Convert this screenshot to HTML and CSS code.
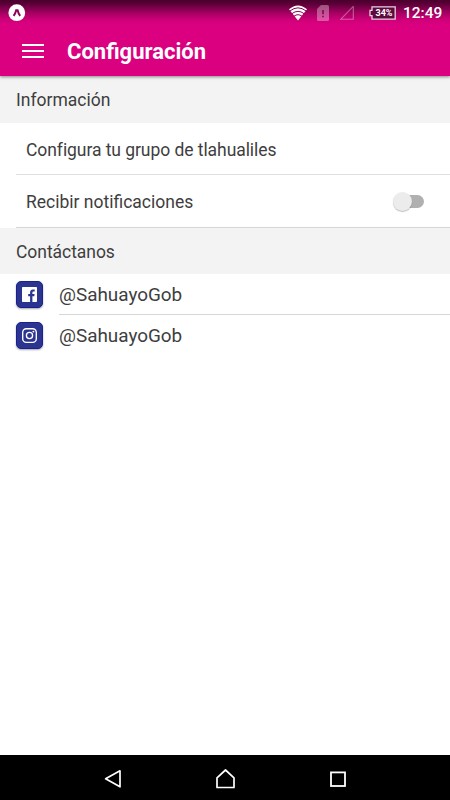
FILE: index.html
```
<!DOCTYPE html>
<html lang="es">
<head>
  <meta charset="UTF-8">
  <meta name="viewport" content="width=device-width, initial-scale=1.0">
  <title>Configuración</title>
  <link rel="stylesheet" href="styles.css">
</head>
<body>
  <header>
    <div class="status-bar">
      <svg class="app-icon" width="18" height="18" viewBox="0 0 18 18">
        <circle cx="8.8" cy="8.7" r="8.4" fill="#fff"/>
        <path d="M5.6 11.8 Q7.4 9.6 8.2 6.2 H9.6 Q10.4 9.6 12.2 11.8" fill="none" stroke="#8f0058" stroke-width="2"/>
      </svg>
      <svg class="wifi" width="18" height="16" viewBox="0 0 18 16">
        <path d="M9 15.5 L0 4.2 Q9 -3.4 18 4.2 Z" fill="#fff"/>
        <path d="M1 5.9 Q9 -0.2 17 5.9 M3 8.6 Q9 4.1 15 8.6 M5 11.2 Q9 8.2 13 11.2" fill="none" stroke="#8f0058" stroke-width="1"/>
      </svg>
      <svg class="sim" width="12" height="16" viewBox="0 0 12 16">
        <path d="M4 0 H10.5 Q12 0 12 1.5 V14.5 Q12 16 10.5 16 H1.5 Q0 16 0 14.5 V4 Z" fill="#fff" fill-opacity=".33"/>
        <path d="M5.2 5 H6.8 V9.3 H5.2 Z M5.2 10.7 H6.8 V12.3 H5.2 Z" fill="#8a0056"/>
      </svg>
      <svg class="signal" width="14" height="14" viewBox="0 0 14 14">
        <path d="M13.3 .4 V13.3 H.6 Z" fill="none" stroke="#fff" stroke-opacity=".36" stroke-width="1.1"/>
      </svg>
      <div class="battery">
        <svg width="28" height="14" viewBox="0 0 28 14">
          <path d="M3 .8 H26.2 V13.2 H3 V9.6 H1 V4.4 H3 Z" fill="#5d0a3f" stroke="#e9cfe0" stroke-width="1.3"/>
        </svg>
        <span>34%</span>
      </div>
      <span class="clock">12:49</span>
    </div>
    <div class="toolbar">
      <div class="menu-icon">
        <span></span>
        <span></span>
        <span></span>
      </div>
      <h1>Configuración</h1>
    </div>
  </header>
  <main>
    <h2>Información</h2>
    <div class="item">
      <p>Configura tu grupo de tlahualiles</p>
    </div>
    <div class="item">
      <p>Recibir notificaciones</p>
      <div class="switch"></div>
    </div>
    <h2 class="contact-title">Contáctanos</h2>
    <div class="contact">
      <div class="social">
        <svg width="15" height="15" viewBox="0 0 15 15">
          <path d="M0 .8 Q0 0 .8 0 H14.2 Q15 0 15 .8 V14.2 Q15 15 14.2 15 H10.4 V9.3 H12.3 L12.6 7 H10.4 V5.6 Q10.4 4.5 11.5 4.5 H12.7 V2.5 Q12 2.4 11 2.4 Q8.1 2.4 8.1 5.3 V7 H6.2 V9.3 H8.1 V15 H.8 Q0 15 0 14.2 Z" fill="#fff"/>
        </svg>
      </div>
      <p>@SahuayoGob</p>
    </div>
    <div class="contact">
      <div class="social">
        <svg width="15" height="15" viewBox="0 0 15 15">
          <rect x=".7" y=".7" width="13.6" height="13.6" rx="3.6" fill="none" stroke="#fff" stroke-width="1.35"/>
          <circle cx="7.5" cy="7.5" r="3.1" fill="none" stroke="#fff" stroke-width="1.35"/>
          <circle cx="11.4" cy="3.6" r=".95" fill="#fff"/>
        </svg>
      </div>
      <p>@SahuayoGob</p>
    </div>
  </main>
  <footer>
    <svg width="18" height="20" viewBox="0 0 18 20">
      <path d="M16 1.8 V17.8 L1.6 9.8 Z" fill="none" stroke="#fff" stroke-width="1.7" stroke-linejoin="round"/>
    </svg>
    <svg width="20" height="20" viewBox="0 0 20 20">
      <path d="M1 8.8 L9.5 1 L18 8.8 V18.5 H1 Z" fill="none" stroke="#fff" stroke-width="1.7" stroke-linejoin="round"/>
    </svg>
    <svg width="16" height="16" viewBox="0 0 16 16">
      <rect x="1" y="1.4" width="14" height="13.6" fill="none" stroke="#fff" stroke-width="1.8"/>
    </svg>
  </footer>
</body>
</html>
```

FILE: styles.css
```
:root {
  --primary-color: #da007f;
  --section-bg: #f3f3f3;
  --text-color: #3e3e3e;
  --border-color: #d6d6d6;
  --social-color: #2b3590;
}
* {
  box-sizing: border-box;
  margin: 0;
  padding: 0;
}
body {
  height: 800px;
  display: flex;
  flex-direction: column;
  font-family: Roboto, "Liberation Sans", sans-serif;
  background-color: #fff;
  color: var(--text-color);
  overflow: hidden;
}
svg {
  display: block;
  flex: none;
}
header {
  position: relative;
  z-index: 1;
  height: 76px;
  background: linear-gradient(#48002b 0, #5c0038 4px, #a50061 13px, #cf0079 20px, var(--primary-color) 25px);
  box-shadow: 0 1px 3px rgba(0, 0, 0, 0.45);
}
.status-bar {
  height: 25px;
  padding: 0 8px;
  display: flex;
  align-items: center;
  color: #fff;
}
.app-icon {
  margin-right: auto;
}
.sim {
  margin-left: 10px;
}
.signal {
  margin-left: 11px;
}
.battery {
  position: relative;
  margin-left: 15px;
}
.battery span {
  position: absolute;
  top: 0;
  left: 2px;
  width: 26px;
  line-height: 14px;
  font-size: 9px;
  font-weight: bold;
  text-align: center;
}
.clock {
  width: 39px;
  margin-left: 6px;
  font-size: 15.5px;
  font-weight: 500;
  line-height: 24px;
  white-space: nowrap;
}
.toolbar {
  height: 51px;
  padding-left: 22px;
  display: flex;
  align-items: center;
}
.menu-icon {
  width: 22px;
  height: 14px;
  display: flex;
  flex-direction: column;
  justify-content: space-between;
}
.menu-icon span {
  height: 2px;
  background: #fff;
}
h1 {
  margin-left: 23px;
  padding-top: 2px;
  font-size: 22px;
  font-weight: bold;
  line-height: 28px;
  color: #fff;
}
main {
  flex: 1;
}
h2 {
  height: 47px;
  padding: 1px 16px 0;
  background: var(--section-bg);
  font-size: 17.5px;
  font-weight: normal;
  line-height: 47px;
}
.contact-title {
  height: 46px;
  letter-spacing: -0.05px;
}
.item {
  height: 52px;
  margin-left: 16px;
  padding: 2px 26px 0 10px;
  display: flex;
  align-items: center;
  justify-content: space-between;
  border-bottom: 1px solid #e0e0e0;
  font-size: 17.5px;
}
.item:first-of-type p {
  letter-spacing: -0.06px;
}
.item + .item {
  height: 53px;
  border-bottom-color: var(--border-color);
}
.switch {
  position: relative;
  top: -1px;
  width: 30px;
  height: 13px;
  border-radius: 7px;
  background: #b0b0b0;
}
.switch::before {
  content: "";
  position: absolute;
  top: -3px;
  left: -1px;
  width: 19px;
  height: 19px;
  border-radius: 50%;
  background: #ececec;
  box-shadow: 0 1px 1px rgba(0, 0, 0, 0.25);
}
.contact {
  height: 41px;
  padding-left: 16px;
  display: flex;
  align-items: center;
}
.contact p {
  flex: 1;
  height: 41px;
  margin-left: 16px;
  border-bottom: 1px solid var(--border-color);
  font-size: 18.9px;
  line-height: 42px;
}
.contact:last-child p {
  border-bottom: none;
}
.social {
  width: 27px;
  height: 27px;
  display: flex;
  align-items: center;
  justify-content: center;
  border: 1px solid #1a2090;
  border-radius: 5px;
  background: var(--social-color);
  box-shadow: 0 1px 2px rgba(0, 0, 0, 0.35);
}
footer {
  height: 45px;
  padding: 3px 104px 0;
  display: flex;
  align-items: center;
  justify-content: space-between;
  background: #000;
}
```
